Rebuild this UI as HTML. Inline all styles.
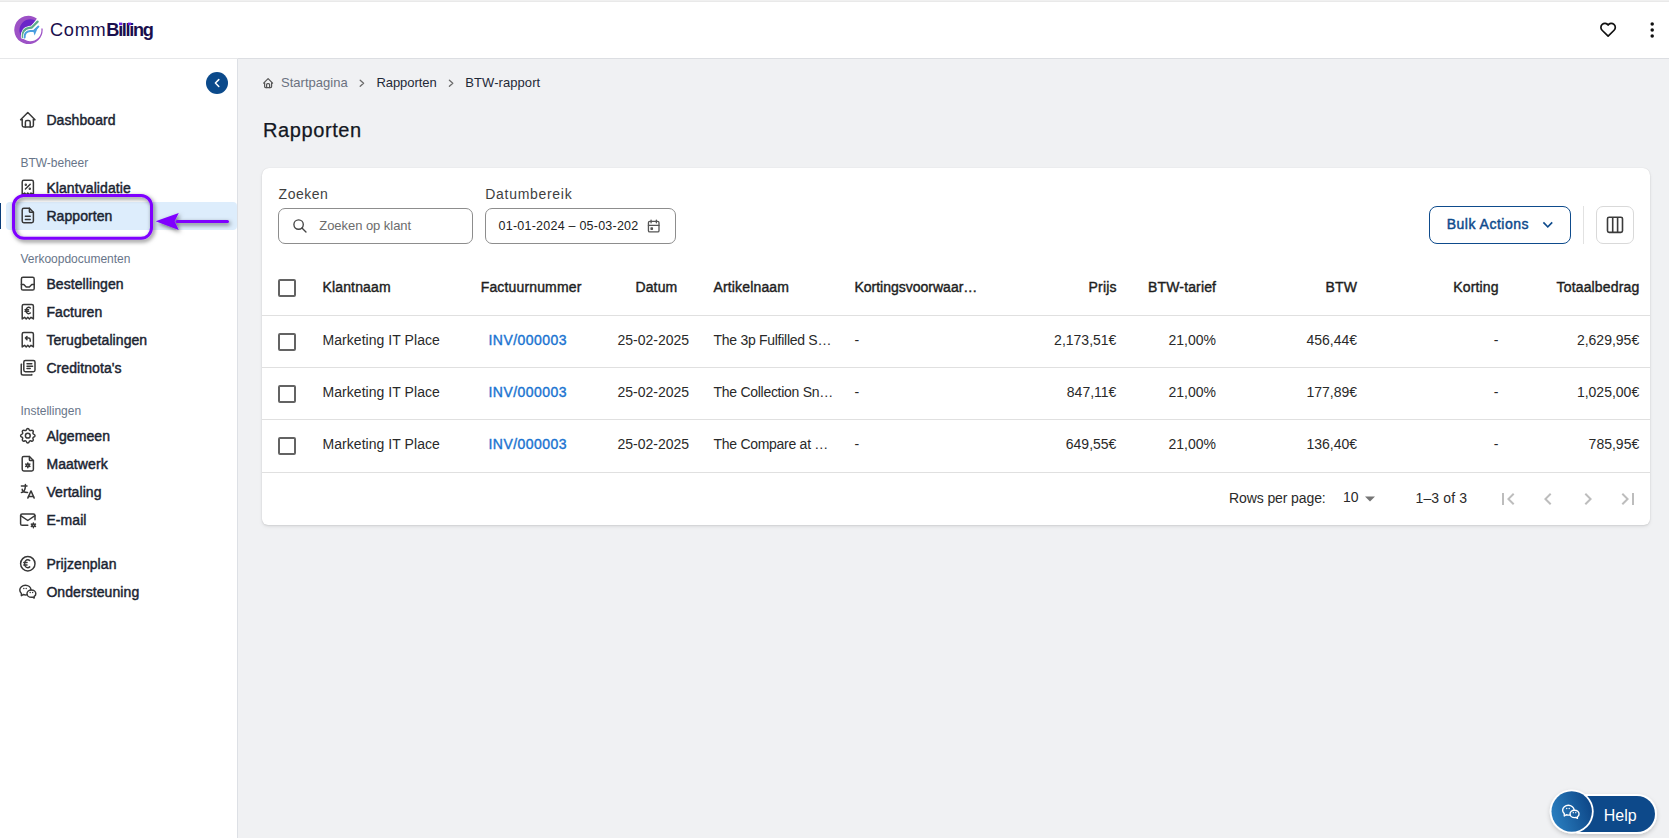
<!DOCTYPE html>
<html><head><meta charset="utf-8">
<style>
*{box-sizing:border-box;margin:0;padding:0}
html,body{width:1669px;height:838px;overflow:hidden;background:#f0f1f3;font-family:"Liberation Sans",sans-serif}
.abs{position:absolute}
.t{position:absolute;white-space:nowrap;line-height:1}
</style></head>
<body>
<div class="abs" style="left:0;top:0;width:1669px;height:1px;background:#f0f0f0"></div>
<div class="abs" style="left:0;top:1px;width:1669px;height:1px;background:#e9e9e9"></div>
<div class="abs" style="left:0px;top:2px;width:1669px;height:56px;background:#fff"></div>
<div class="abs" style="left:0px;top:58px;width:1669px;height:1px;background:#e6e7e9"></div>
<div class="abs" style="left:0px;top:59px;width:237px;height:779px;background:#fff"></div>
<div class="abs" style="left:237px;top:59px;width:1px;height:779px;background:#dde0e5"></div>
<div class="abs" style="left:238px;top:58px;width:1431px;height:1px;background:#dcdee2"></div>
<svg class="abs" style="left:12px;top:14px" width="34" height="32" viewBox="0 0 34 32">
<path d="M24.2 5.2 L19.6 12.2 C15.8 12.4 12.2 13.8 10.6 17.6 L9.2 23.4 A11.8 11.8 0 0 1 24.2 5.2 Z" fill="#6b25c8"/>
<path d="M24.8 4.4 A14.2 14.2 0 1 0 30.6 14.6 L29.3 14.6 A11 11 0 1 1 23.6 6.5 Z" fill="#9d52c6"/>
<path d="M10.8 23.2 C10.4 17.8 12.6 14.4 17.2 13.8 L19.8 13.5 L25.6 7.6" fill="none" stroke="#fff" stroke-width="3.8" stroke-linecap="round" stroke-linejoin="round"/>
<path d="M10.8 23.2 C10.4 17.8 12.6 14.4 17.2 13.8 L19.8 13.5 L25.6 7.6" fill="none" stroke="#5dab8c" stroke-width="2.3" stroke-linecap="round" stroke-linejoin="round"/>
<path d="M12.6 23.6 C12.4 19.8 14.4 17.4 18.2 17.1 L21.8 16.9 L26.4 12.6" fill="none" stroke="#fff" stroke-width="3.4" stroke-linecap="round" stroke-linejoin="round"/>
<path d="M12.6 23.6 C12.4 19.8 14.4 17.4 18.2 17.1 L21.8 16.9 L26.4 12.6" fill="none" stroke="#4a9fe0" stroke-width="2" stroke-linecap="round" stroke-linejoin="round"/>
<path d="M21 16.5 L26.6 12 L22.6 21.6 Z" fill="#4a9fe0"/>
</svg>
<div class="t" style="left:50px;top:20.5px;font-size:18.2px;color:#1a0f4d"><span style="font-weight:400;letter-spacing:0.7px">Comm</span><span style="font-weight:700;letter-spacing:-1.35px">Billing</span></div>
<svg class="abs" style="left:110px;top:18px" width="30" height="10" viewBox="110 18 30 10"><rect x="119" y="22.6" width="3.2" height="2.6" fill="#6a1ee0"/><rect x="128" y="22.6" width="3.2" height="2.6" fill="#6a1ee0"/></svg>
<svg class="abs" style="left:0;top:0" width="1669" height="60" viewBox="0 0 1669 60">
<g transform="translate(1598.5 20.2) scale(0.8)" fill="none" stroke="#111" stroke-width="2.1" stroke-linecap="round" stroke-linejoin="round">
<path d="M19.5 12.572l-7.5 7.428l-7.5 -7.428a5 5 0 1 1 7.5 -6.566a5 5 0 1 1 7.5 6.572"/></g>
<circle cx="1652.2" cy="24.1" r="1.75" fill="#111"/><circle cx="1652.2" cy="30" r="1.75" fill="#111"/><circle cx="1652.2" cy="35.9" r="1.75" fill="#111"/>
</svg>
<div class="abs" style="left:206px;top:72px;width:22px;height:22px;border-radius:50%;background:#0b4a8b"></div>
<svg class="abs" style="left:206px;top:72px" width="22" height="22" viewBox="0 0 22 22"><path d="M12.8 7.6 L9.4 11.05 L12.8 14.5" fill="none" stroke="#fff" stroke-width="1.5" stroke-linecap="round" stroke-linejoin="round"/></svg>
<div class="abs" style="left:6px;top:202px;width:231px;height:28px;background:#ddedfc;border-radius:4px"></div>
<div class="abs" style="left:0px;top:203px;width:1.2px;height:26px;background:#0a3d7a"></div>
<div class="t" style="top:112.95px;font-size:14px;color:#1b2431;letter-spacing:0.08px;left:46.4px;-webkit-text-stroke:0.45px #1b2431;">Dashboard</div>
<div class="t" style="top:180.75px;font-size:14px;color:#1b2431;letter-spacing:0.08px;left:46.4px;-webkit-text-stroke:0.45px #1b2431;">Klantvalidatie</div>
<div class="t" style="top:208.75px;font-size:14px;color:#1b2431;letter-spacing:0.08px;left:46.4px;-webkit-text-stroke:0.45px #1b2431;">Rapporten</div>
<div class="t" style="top:276.95px;font-size:14px;color:#1b2431;letter-spacing:0.08px;left:46.4px;-webkit-text-stroke:0.45px #1b2431;">Bestellingen</div>
<div class="t" style="top:304.95px;font-size:14px;color:#1b2431;letter-spacing:0.08px;left:46.4px;-webkit-text-stroke:0.45px #1b2431;">Facturen</div>
<div class="t" style="top:332.95px;font-size:14px;color:#1b2431;letter-spacing:0.08px;left:46.4px;-webkit-text-stroke:0.45px #1b2431;">Terugbetalingen</div>
<div class="t" style="top:360.95px;font-size:14px;color:#1b2431;letter-spacing:0.08px;left:46.4px;-webkit-text-stroke:0.45px #1b2431;">Creditnota's</div>
<div class="t" style="top:428.95px;font-size:14px;color:#1b2431;letter-spacing:0.08px;left:46.4px;-webkit-text-stroke:0.45px #1b2431;">Algemeen</div>
<div class="t" style="top:456.95px;font-size:14px;color:#1b2431;letter-spacing:0.08px;left:46.4px;-webkit-text-stroke:0.45px #1b2431;">Maatwerk</div>
<div class="t" style="top:484.95px;font-size:14px;color:#1b2431;letter-spacing:0.08px;left:46.4px;-webkit-text-stroke:0.45px #1b2431;">Vertaling</div>
<div class="t" style="top:512.95px;font-size:14px;color:#1b2431;letter-spacing:0.08px;left:46.4px;-webkit-text-stroke:0.45px #1b2431;">E-mail</div>
<div class="t" style="top:556.95px;font-size:14px;color:#1b2431;letter-spacing:0.08px;left:46.4px;-webkit-text-stroke:0.45px #1b2431;">Prijzenplan</div>
<div class="t" style="top:584.95px;font-size:14px;color:#1b2431;letter-spacing:0.08px;left:46.4px;-webkit-text-stroke:0.45px #1b2431;">Ondersteuning</div>
<div class="t" style="top:156.64px;font-size:12px;color:#687589;left:20.4px;">BTW-beheer</div>
<div class="t" style="top:252.84px;font-size:12px;color:#687589;left:20.4px;">Verkoopdocumenten</div>
<div class="t" style="top:404.84px;font-size:12px;color:#687589;left:20.4px;">Instellingen</div>
<svg class="abs" style="left:0;top:0" width="238" height="620" viewBox="0 0 238 620"><g fill="none" stroke="#383838" stroke-width="1.85" stroke-linecap="round" stroke-linejoin="round"><g transform="translate(18.2 110.10) scale(0.8)"><path d="M5 12l-2 0l9 -9l9 9l-2 0"/><path d="M5 12v7a2 2 0 0 0 2 2h10a2 2 0 0 0 2 -2v-7"/><path d="M9 21v-6a2 2 0 0 1 2 -2h2a2 2 0 0 1 2 2v6"/></g><g transform="translate(18.2 177.90) scale(0.8)"><path d="M9 14l6 -6"/><circle cx="9.5" cy="8.5" r=".6" fill="#3a3a3a"/><circle cx="14.5" cy="13.5" r=".6" fill="#3a3a3a"/><path d="M5 21v-16a2 2 0 0 1 2 -2h10a2 2 0 0 1 2 2v16l-3 -2l-2 2l-2 -2l-2 2l-2 -2l-3 2"/></g><g transform="translate(18.2 205.90) scale(0.8)"><path d="M14 3v4a1 1 0 0 0 1 1h4"/><path d="M17 21h-10a2 2 0 0 1 -2 -2v-14a2 2 0 0 1 2 -2h7l5 5v11a2 2 0 0 1 -2 2z"/><path d="M9 17h6"/><path d="M9 13h6"/></g><g transform="translate(18.2 274.10) scale(0.8)"><rect x="4" y="4" width="16" height="16" rx="2"/><path d="M4 13h3l3 3h4l3 -3h3"/></g><g transform="translate(18.2 302.10) scale(0.8)"><path d="M5 21v-16a2 2 0 0 1 2 -2h10a2 2 0 0 1 2 2v16l-3 -2l-2 2l-2 -2l-2 2l-2 -2l-3 2"/><path d="M15.2 7.3a3.4 4 0 1 0 0 6.4"/><path d="M8.6 9.6h4.4M8.6 11.6h4.4"/></g><g transform="translate(18.2 330.10) scale(0.8)"><path d="M5 21v-16a2 2 0 0 1 2 -2h10a2 2 0 0 1 2 2v16l-3 -2l-2 2l-2 -2l-2 2l-2 -2l-3 2"/><path d="M15 14v-2a2 2 0 0 0 -2 -2h-4l2 -2m0 4l-2 -2"/></g><g transform="translate(18.2 358.10) scale(0.8)"><rect x="7" y="3" width="14" height="14" rx="2"/><path d="M17 20.6v0.4a0 0 0 0 1 0 0h-11a2.2 2.2 0 0 1 -2.2 -2.2v-11.2a0 0 0 0 1 0 0h0.4"/><path d="M11 7h6M11 10.2h7M11 13h4"/></g><g transform="translate(18.2 426.10) scale(0.8)"><path d="M10.325 4.317c.426 -1.756 2.924 -1.756 3.35 0a1.724 1.724 0 0 0 2.573 1.066c1.543 -.94 3.31 .826 2.37 2.37a1.724 1.724 0 0 0 1.065 2.572c1.756 .426 1.756 2.924 0 3.35a1.724 1.724 0 0 0 -1.066 2.573c.94 1.543 -.826 3.31 -2.37 2.37a1.724 1.724 0 0 0 -2.572 1.065c-.426 1.756 -2.924 1.756 -3.35 0a1.724 1.724 0 0 0 -2.573 -1.066c-1.543 .94 -3.31 -.826 -2.37 -2.37a1.724 1.724 0 0 0 -1.065 -2.572c-1.756 -.426 -1.756 -2.924 0 -3.35a1.724 1.724 0 0 0 1.066 -2.573c-.94 -1.543 .826 -3.31 2.37 -2.37c1 .608 2.296 .07 2.572 -1.065z"/><path d="M9 12a3 3 0 1 0 6 0a3 3 0 0 0 -6 0"/></g><g transform="translate(18.2 454.10) scale(0.8)"><path d="M14 3v4a1 1 0 0 0 1 1h4"/><path d="M17 21h-10a2 2 0 0 1 -2 -2v-14a2 2 0 0 1 2 -2h7l5 5v11a2 2 0 0 1 -2 2z"/><path d="M12 14m-1.6 0a1.6 1.6 0 1 0 3.2 0a1.6 1.6 0 1 0 -3.2 0"/><path d="M12 11v1.4M12 15.6v1.4M14.6 12.5l-1.2 .7M10.6 14.8l-1.2 .7M14.6 15.5l-1.2 -.7M10.6 13.2l-1.2 -.7"/></g><g transform="translate(18.2 482.10) scale(0.8)"><path d="M4 5h7"/><path d="M9 3v2c0 4.418 -2.239 8 -5 8"/><path d="M5 9c0 2.144 2.952 3.908 6.7 4"/><path d="M12 20l4 -9l4 9"/><path d="M19.1 18h-6.2"/></g><g transform="translate(18.2 510.10) scale(0.8)"><path d="M12 19h-7a2 2 0 0 1 -2 -2v-10a2 2 0 0 1 2 -2h14a2 2 0 0 1 2 2v5"/><path d="M3 7l9 6l9 -6"/><path d="M19.001 19m-1.6 0a1.6 1.6 0 1 0 3.2 0a1.6 1.6 0 1 0 -3.2 0"/><path d="M19.001 16v1.4M19.001 20.6v1.4M21.6 17.5l-1.2 .7M17.6 19.8l-1.2 .7M16.4 17.5l1.2 .7M20.4 19.8l1.2 .7"/></g><g transform="translate(18.2 554.10) scale(0.8)"><path d="M12 12m-9 0a9 9 0 1 0 18 0a9 9 0 1 0 -18 0"/><path d="M14.401 8c-.669 -.628 -1.5 -1 -2.401 -1c-2.21 0 -4 2.239 -4 5s1.79 5 4 5c.9 0 1.731 -.372 2.4 -1"/><path d="M7 10.5h4"/><path d="M7 13.5h4"/></g><g transform="translate(18.2 582.10) scale(0.8)"><path d="M16.5 10c3.038 0 5.5 2.015 5.5 4.5c0 1.397 -.778 2.645 -2 3.47l0 2.03l-1.964 -1.178a6.649 6.649 0 0 1 -1.536 .178c-3.038 0 -5.5 -2.015 -5.5 -4.5s2.462 -4.5 5.5 -4.5z"/><path d="M11.197 15.698c-.69 .196 -1.43 .302 -2.197 .302a8.008 8.008 0 0 1 -2.612 -.432l-2.388 1.432v-2.801c-1.237 -1.082 -2 -2.564 -2 -4.199c0 -3.314 3.134 -6 7 -6c3.782 0 6.863 2.57 7 5.785l0 .233"/><path d="M10 8h.01"/><path d="M7 8h.01"/><path d="M15 13h.01"/><path d="M18 13h.01"/></g></g></svg>
<svg class="abs" style="left:0;top:60px" width="560" height="40" viewBox="0 60 560 40"><g fill="none" stroke="#555" stroke-width="2.4" stroke-linecap="round" stroke-linejoin="round" transform="translate(262.1 77.1) scale(0.5)"><path d="M5 12l-2 0l9 -9l9 9l-2 0"/><path d="M5 12v7a2 2 0 0 0 2 2h10a2 2 0 0 0 2 -2v-7"/><path d="M9 21v-6a2 2 0 0 1 2 -2h2a2 2 0 0 1 2 2v6"/></g><g fill="none" stroke="#6b6b6b" stroke-width="1.3" stroke-linecap="round" stroke-linejoin="round"><path d="M360.2 80.3l3.4 3l-3.4 3"/><path d="M449.4 80.3l3.4 3l-3.4 3"/></g></svg>
<div class="t" style="top:75.90px;font-size:13px;color:#6b7280;letter-spacing:0.02px;left:281px;">Startpagina</div>
<div class="t" style="top:76.00px;font-size:13px;color:#1f2937;letter-spacing:-0.05px;left:376.4px;">Rapporten</div>
<div class="t" style="top:76.00px;font-size:13px;color:#1f2937;letter-spacing:0.07px;left:465.3px;">BTW-rapport</div>
<div class="t" style="top:119.77px;font-size:20px;color:#131722;letter-spacing:0.6px;left:263px;-webkit-text-stroke:0.25px #131722;">Rapporten</div>
<div class="abs" style="left:262px;top:168px;width:1388px;height:357px;background:#fff;border-radius:7px 7px 6px 6px;box-shadow:0 0 1px rgba(0,0,0,.14),0 1px 2px rgba(0,0,0,.08),0 2px 4px rgba(0,0,0,.06)"></div>
<div class="t" style="top:186.95px;font-size:14px;color:#3f3f3f;letter-spacing:0.5px;left:278.6px;">Zoeken</div>
<div class="t" style="top:186.95px;font-size:14px;color:#3f3f3f;letter-spacing:0.7px;left:485.3px;">Datumbereik</div>
<div class="abs" style="left:278px;top:208px;width:195px;height:35.5px;border:1px solid #8d8d8d;border-radius:7px"></div>
<div class="abs" style="left:485px;top:208.4px;width:191px;height:35.19999999999999px;border:1px solid #8d8d8d;border-radius:7px"></div>
<div class="t" style="top:219.00px;font-size:13px;color:#6c6c6c;letter-spacing:-0.05px;left:319.3px;">Zoeken op klant</div>
<div class="t" style="top:220.32px;font-size:12.5px;color:#222;letter-spacing:0.23px;left:498.6px;">01-01-2024 – 05-03-202</div>
<svg class="abs" style="left:0;top:0" width="700" height="260" viewBox="0 0 700 260"><g fill="none" stroke="#444" stroke-width="2" stroke-linecap="round" stroke-linejoin="round"><g transform="translate(291.9 217.9) scale(0.67)"><path d="M10 10m-7 0a7 7 0 1 0 14 0a7 7 0 1 0 -14 0"/><path d="M21 21l-6 -6"/></g><g transform="translate(645.8 218.1) scale(0.66)" stroke="#555"><path d="M4 5m0 2a2 2 0 0 1 2 -2h12a2 2 0 0 1 2 2v12a2 2 0 0 1 -2 2h-12a2 2 0 0 1 -2 -2z"/><path d="M16 3l0 4"/><path d="M8 3l0 4"/><path d="M4 11l16 0"/><path d="M8 15h2v2h-2z"/></g></g></svg>
<div class="abs" style="left:1429px;top:206px;width:142px;height:37.5px;border:1px solid #0e4b8c;border-radius:8px"></div>
<div class="t" style="top:217.05px;font-size:14px;color:#0e4b8c;letter-spacing:0.5px;left:1446.7px;-webkit-text-stroke:0.45px #0e4b8c;">Bulk Actions</div>
<svg class="abs" style="left:1530px;top:210px" width="30" height="30" viewBox="1530 210 30 30"><path d="M543.6 222.6" /><g transform="translate(1537.8 214.7) scale(0.833)"><path d="M7.41 8.59L12 13.17l4.59-4.58L18 10l-6 6-6-6 1.41-1.41z" fill="#0e4b8c"/></g></svg>
<div class="abs" style="left:1583px;top:206px;width:1px;height:38px;background:#e2e2e2"></div>
<div class="abs" style="left:1596px;top:206px;width:38px;height:37.599999999999994px;border:1px solid #d9d9d9;border-radius:7px"></div>
<svg class="abs" style="left:1600px;top:210px" width="30" height="30" viewBox="1600 210 30 30"><g fill="none" stroke="#3b3b3b" stroke-width="1.6" stroke-linejoin="round"><rect x="1607.5" y="217.2" width="15" height="15.2" rx="1.6"/><path d="M1612.7 217.2v15.2M1617.6 217.2v15.2"/></g></svg>
<div class="t" style="top:280.45px;font-size:14px;color:#1e1e1e;letter-spacing:0.15px;left:322.5px;-webkit-text-stroke:0.4px #1e1e1e;">Klantnaam</div>
<div class="t" style="top:280.45px;font-size:14px;color:#1e1e1e;letter-spacing:0.15px;left:480.7px;-webkit-text-stroke:0.4px #1e1e1e;">Factuurnummer</div>
<div class="t" style="top:280.45px;font-size:14px;color:#1e1e1e;letter-spacing:0.15px;left:635.4px;-webkit-text-stroke:0.4px #1e1e1e;">Datum</div>
<div class="t" style="top:280.45px;font-size:14px;color:#1e1e1e;letter-spacing:0.15px;left:713.5px;-webkit-text-stroke:0.4px #1e1e1e;">Artikelnaam</div>
<div class="t" style="top:280.45px;font-size:14px;color:#1e1e1e;left:854.4px;-webkit-text-stroke:0.4px #1e1e1e;">Kortingsvoorwaar…</div>
<div class="t" style="top:280.45px;font-size:14px;color:#1e1e1e;letter-spacing:0.15px;right:552.4499999999999px;-webkit-text-stroke:0.4px #1e1e1e;">Prijs</div>
<div class="t" style="top:280.45px;font-size:14px;color:#1e1e1e;letter-spacing:0.15px;right:452.85px;-webkit-text-stroke:0.4px #1e1e1e;">BTW-tarief</div>
<div class="t" style="top:280.45px;font-size:14px;color:#1e1e1e;letter-spacing:0.15px;right:311.85px;-webkit-text-stroke:0.4px #1e1e1e;">BTW</div>
<div class="t" style="top:280.45px;font-size:14px;color:#1e1e1e;letter-spacing:0.15px;right:170.35px;-webkit-text-stroke:0.4px #1e1e1e;">Korting</div>
<div class="t" style="top:280.45px;font-size:14px;color:#1e1e1e;letter-spacing:0.15px;right:29.649999999999956px;-webkit-text-stroke:0.4px #1e1e1e;">Totaalbedrag</div>
<div class="abs" style="left:262px;top:315px;width:1388px;height:1px;background:#e0e0e0"></div>
<div class="abs" style="left:278px;top:279px;width:18px;height:18px;border:2px solid #636363;border-radius:2px"></div>
<div class="abs" style="left:278px;top:333px;width:18px;height:18px;border:2px solid #636363;border-radius:2px"></div>
<div class="t" style="top:332.95px;font-size:14px;color:#292929;letter-spacing:0.05px;left:322.5px;">Marketing IT Place</div>
<div class="t" style="top:332.95px;font-size:14px;color:#1b74d1;letter-spacing:0.45px;left:488.5px;-webkit-text-stroke:0.4px #1b74d1;">INV/000003</div>
<div class="t" style="top:332.95px;font-size:14px;color:#292929;right:979.9px;">25-02-2025</div>
<div class="t" style="top:332.95px;font-size:14px;color:#292929;letter-spacing:-0.28px;left:713.5px;">The 3p Fulfilled S…</div>
<div class="t" style="top:332.95px;font-size:14px;color:#292929;left:854.4px;">-</div>
<div class="t" style="top:332.95px;font-size:14px;color:#292929;right:552.5999999999999px;">2,173,51€</div>
<div class="t" style="top:332.95px;font-size:14px;color:#292929;right:453px;">21,00%</div>
<div class="t" style="top:332.95px;font-size:14px;color:#292929;right:312px;">456,44€</div>
<div class="t" style="top:332.95px;font-size:14px;color:#292929;right:170.70000000000005px;">-</div>
<div class="t" style="top:332.95px;font-size:14px;color:#292929;right:29.799999999999955px;">2,629,95€</div>
<div class="abs" style="left:262px;top:367px;width:1388px;height:1px;background:#e0e0e0"></div>
<div class="abs" style="left:278px;top:385px;width:18px;height:18px;border:2px solid #636363;border-radius:2px"></div>
<div class="t" style="top:384.95px;font-size:14px;color:#292929;letter-spacing:0.05px;left:322.5px;">Marketing IT Place</div>
<div class="t" style="top:384.95px;font-size:14px;color:#1b74d1;letter-spacing:0.45px;left:488.5px;-webkit-text-stroke:0.4px #1b74d1;">INV/000003</div>
<div class="t" style="top:384.95px;font-size:14px;color:#292929;right:979.9px;">25-02-2025</div>
<div class="t" style="top:384.95px;font-size:14px;color:#292929;letter-spacing:-0.28px;left:713.5px;">The Collection Sn…</div>
<div class="t" style="top:384.95px;font-size:14px;color:#292929;left:854.4px;">-</div>
<div class="t" style="top:384.95px;font-size:14px;color:#292929;right:552.5999999999999px;">847,11€</div>
<div class="t" style="top:384.95px;font-size:14px;color:#292929;right:453px;">21,00%</div>
<div class="t" style="top:384.95px;font-size:14px;color:#292929;right:312px;">177,89€</div>
<div class="t" style="top:384.95px;font-size:14px;color:#292929;right:170.70000000000005px;">-</div>
<div class="t" style="top:384.95px;font-size:14px;color:#292929;right:29.799999999999955px;">1,025,00€</div>
<div class="abs" style="left:262px;top:419px;width:1388px;height:1px;background:#e0e0e0"></div>
<div class="abs" style="left:278px;top:437px;width:18px;height:18px;border:2px solid #636363;border-radius:2px"></div>
<div class="t" style="top:436.85px;font-size:14px;color:#292929;letter-spacing:0.05px;left:322.5px;">Marketing IT Place</div>
<div class="t" style="top:436.85px;font-size:14px;color:#1b74d1;letter-spacing:0.45px;left:488.5px;-webkit-text-stroke:0.4px #1b74d1;">INV/000003</div>
<div class="t" style="top:436.85px;font-size:14px;color:#292929;right:979.9px;">25-02-2025</div>
<div class="t" style="top:436.85px;font-size:14px;color:#292929;letter-spacing:-0.28px;left:713.5px;">The Compare at …</div>
<div class="t" style="top:436.85px;font-size:14px;color:#292929;left:854.4px;">-</div>
<div class="t" style="top:436.85px;font-size:14px;color:#292929;right:552.5999999999999px;">649,55€</div>
<div class="t" style="top:436.85px;font-size:14px;color:#292929;right:453px;">21,00%</div>
<div class="t" style="top:436.85px;font-size:14px;color:#292929;right:312px;">136,40€</div>
<div class="t" style="top:436.85px;font-size:14px;color:#292929;right:170.70000000000005px;">-</div>
<div class="t" style="top:436.85px;font-size:14px;color:#292929;right:29.799999999999955px;">785,95€</div>
<div class="abs" style="left:262px;top:472px;width:1388px;height:1px;background:#e0e0e0"></div>
<div class="t" style="top:491.15px;font-size:14px;color:#2a2a2a;letter-spacing:-0.1px;left:1229px;">Rows per page:</div>
<div class="t" style="top:489.95px;font-size:14px;color:#2a2a2a;left:1343px;">10</div>
<div class="t" style="top:491.15px;font-size:14px;color:#2a2a2a;letter-spacing:0.15px;left:1415.5px;">1–3 of 3</div>
<svg class="abs" style="left:1350px;top:480px" width="300" height="30" viewBox="1350 480 300 30"><g transform="translate(1358 486.5)"><path d="M7 10l5 5 5-5z" fill="#757575"/></g><g fill="#bdbdbd"><g transform="translate(1496 487)"><path d="M18.41 16.59L13.82 12l4.59-4.59L17 6l-6 6 6 6zM6 6h2v12H6z"/></g><g transform="translate(1536 487)"><path d="M15.41 16.59L10.83 12l4.58-4.59L14 6l-6 6 6 6 1.41-1.41z"/></g><g transform="translate(1576 487)"><path d="M8.59 16.59L13.17 12 8.59 7.41 10 6l6 6-6 6-1.41-1.41z"/></g><g transform="translate(1616 487)"><path d="M5.59 7.41L10.18 12l-4.59 4.59L7 18l6-6-6-6zM16 6h2v12h-2z"/></g></g></svg>
<svg class="abs" style="left:1540px;top:780px" width="129" height="58" viewBox="1540 780 129 58">
<defs>
<linearGradient id="hg" x1="0" y1="0.65" x2="1" y2="0.35"><stop offset="0" stop-color="#2a7fc0"/><stop offset="1" stop-color="#0d4687"/></linearGradient>
<filter id="hs" x="-30%" y="-30%" width="160%" height="170%"><feDropShadow dx="0" dy="2" stdDeviation="2" flood-color="#000" flood-opacity="0.18"/></filter>
</defs>
<g filter="url(#hs)">
<rect x="1562" y="794" width="95" height="40" rx="20" fill="#fff"/>
<rect x="1564" y="796" width="91" height="36" rx="18" fill="#0e4a8a"/>
<circle cx="1571.7" cy="811.5" r="22" fill="#fff"/>
</g>
<circle cx="1571.7" cy="811.5" r="20.2" fill="url(#hg)"/>
<g transform="translate(1561 802) scale(0.82)" fill="none" stroke="#fff" stroke-width="1.7" stroke-linecap="round" stroke-linejoin="round">
<path d="M16.5 10c3.038 0 5.5 2.015 5.5 4.5c0 1.397 -.778 2.645 -2 3.47l0 2.03l-1.964 -1.178a6.649 6.649 0 0 1 -1.536 .178c-3.038 0 -5.5 -2.015 -5.5 -4.5s2.462 -4.5 5.5 -4.5z"/><path d="M11.197 15.698c-.69 .196 -1.43 .302 -2.197 .302a8.008 8.008 0 0 1 -2.612 -.432l-2.388 1.432v-2.801c-1.237 -1.082 -2 -2.564 -2 -4.199c0 -3.314 3.134 -6 7 -6c3.782 0 6.863 2.57 7 5.785l0 .233"/><path d="M10 8h.01"/><path d="M7 8h.01"/><path d="M15 13h.01"/><path d="M18 13h.01"/>
</g>
</svg>
<div class="t" style="top:807.56px;font-size:16px;color:#fff;left:1603.8px;">Help</div>
<svg class="abs" style="left:0;top:180px" width="240" height="70" viewBox="0 180 240 70">
<defs><filter id="as" x="-20%" y="-40%" width="140%" height="180%"><feDropShadow dx="1.5" dy="2" stdDeviation="2" flood-color="#000" flood-opacity="0.55"/></filter>
<filter id="ins" x="-10%" y="-30%" width="120%" height="160%"><feGaussianBlur stdDeviation="2"/></filter></defs>
<g filter="url(#as)">
<rect x="13.5" y="195.5" width="138" height="42.8" rx="10.5" fill="none" stroke="#7f00ff" stroke-width="3"/>
<path d="M177 221.5 H227.5" stroke="#7f00ff" stroke-width="3" stroke-linecap="round"/>
<path d="M155.6 221.3 L178.8 213 L174.6 221.3 L178.8 230 Z" fill="#7f00ff"/>
</g>
</svg>
</body></html>
